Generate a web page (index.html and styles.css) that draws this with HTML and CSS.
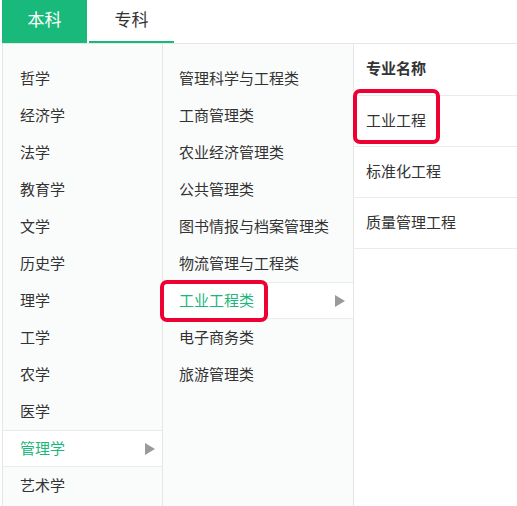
FILE: index.html
```html
<!DOCTYPE html>
<html lang="zh">
<head>
<meta charset="utf-8">
<title>专业目录</title>
<link rel="stylesheet" href="styles.css">
</head>
<body>
<div class="page">
  <div class="tabs">
    <div class="tab tab-active">本科</div>
    <div class="tab tab-line">专科</div>
  </div>
  <div class="panel">
    <div class="col col-cat">
      <div class="item">哲学</div>
      <div class="item">经济学</div>
      <div class="item">法学</div>
      <div class="item">教育学</div>
      <div class="item">文学</div>
      <div class="item">历史学</div>
      <div class="item">理学</div>
      <div class="item">工学</div>
      <div class="item">农学</div>
      <div class="item">医学</div>
      <div class="item item-sel">管理学<span class="arrow"></span></div>
      <div class="item">艺术学</div>
    </div>
    <div class="col col-sub">
      <div class="item">管理科学与工程类</div>
      <div class="item">工商管理类</div>
      <div class="item">农业经济管理类</div>
      <div class="item">公共管理类</div>
      <div class="item">图书情报与档案管理类</div>
      <div class="item">物流管理与工程类</div>
      <div class="item item-sel">工业工程类<span class="arrow"></span></div>
      <div class="item">电子商务类</div>
      <div class="item">旅游管理类</div>
    </div>
    <div class="col col-major">
      <div class="major-head">专业名称</div>
      <div class="major">工业工程</div>
      <div class="major">标准化工程</div>
      <div class="major">质量管理工程</div>
    </div>
  </div>
  <div class="mark mark-sub"></div>
  <div class="mark mark-major"></div>
</div>
</body>
</html>
```
FILE: styles.css
```css
* { box-sizing: border-box; }
html, body {
  margin: 0;
  padding: 0;
  background: #ffffff;
  overflow: hidden;
}
body {
  font-family: "Noto Sans CJK SC", "Noto Sans", sans-serif;
  color: #333333;
  font-size: 15px;
  line-height: 1.2;
}
.page {
  position: relative;
  width: 517px;
  height: 506px;
  padding-left: 2px;
}
.tabs {
  display: flex;
  gap: 2px;
  height: 43px;
}
.tab {
  width: 85px;
  height: 43px;
  display: flex;
  align-items: center;
  justify-content: center;
  font-size: 17px;
  padding-bottom: 4px;
}
.tab-active {
  background: #19b97b;
  color: #ffffff;
}
.tab-line {
  color: #333333;
  border-bottom: 2px solid #19b97b;
  padding-bottom: 2px;
}
.panel {
  display: flex;
  height: 463px;
  border-top: 1px solid #e6e6e6;
  border-left: 1px solid #e6e6e6;
}
.col {
  height: 100%;
}
.col-cat {
  width: 160px;
  background: #fafcfb;
  border-right: 1px solid #e6e6e6;
  padding-top: 16px;
}
.col-sub {
  width: 191px;
  background: #fafcfb;
  border-right: 1px solid #e6e6e6;
  padding-top: 16px;
}
.col-major {
  flex: 1;
  background: #ffffff;
}
.item {
  height: 37px;
  display: flex;
  align-items: center;
  border-top: 1px solid transparent;
  border-bottom: 1px solid transparent;
  white-space: nowrap;
  padding-bottom: 2px;
}
.col-cat .item { padding-left: 17px; padding-right: 7px; }
.col-sub .item { padding-left: 16px; padding-right: 8px; }
.item-sel {
  background: #ffffff;
  color: #1bb77b;
  border-top-color: #ebebeb;
  border-bottom-color: #ebebeb;
}
.arrow {
  margin-left: auto;
  margin-top: 2px;
  width: 0;
  height: 0;
  border-top: 6px solid transparent;
  border-bottom: 6px solid transparent;
  border-left: 10px solid #9a9a9a;
}
.major-head {
  height: 52px;
  display: flex;
  align-items: center;
  padding-left: 12px;
  padding-bottom: 3px;
  font-weight: bold;
  border-bottom: 1px solid #ebebeb;
}
.major {
  height: 51px;
  display: flex;
  align-items: center;
  padding-left: 12px;
  padding-bottom: 3px;
  border-bottom: 1px solid #ebebeb;
}
.mark {
  position: absolute;
  border: 4px solid #ee0033;
  border-radius: 7px;
}
.mark-sub {
  left: 160px;
  top: 280px;
  width: 108px;
  height: 42px;
}
.mark-major {
  left: 353px;
  top: 89px;
  width: 87px;
  height: 55px;
}
```
